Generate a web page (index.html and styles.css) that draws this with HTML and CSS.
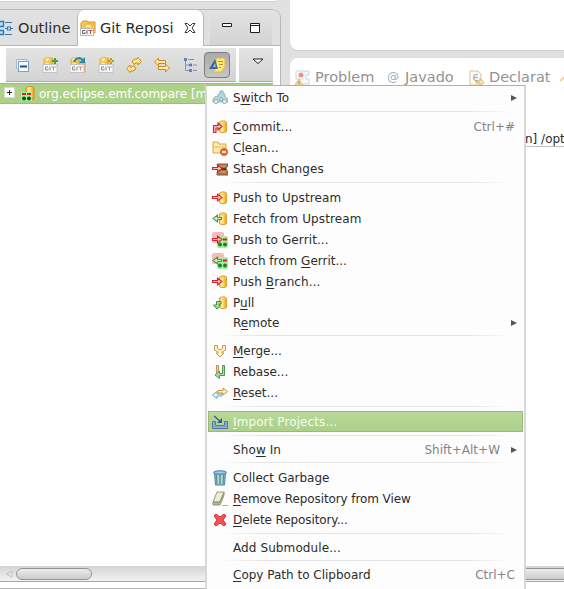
FILE: index.html
```
<!DOCTYPE html>
<html lang="en">
<head>
<meta charset="utf-8">
<title>Git Repositories</title>
<link rel="stylesheet" href="styles.css">
</head>
<body>
<svg class="defs" aria-hidden="true">
  <defs>
    <linearGradient id="gold"><stop offset="0" stop-color="#f3c94e"/><stop offset=".35" stop-color="#fff0a0"/><stop offset="1" stop-color="#e8a010"/></linearGradient>
    <symbol id="db" viewBox="0 0 16 16"><path d="M7.500 3c1-1.500 6-1.500 7 0v9.500c-1 1.500-6 1.500-7 0z" fill="url(#gold)" stroke="#dda12c"/><path d="M8 3.500c1 1 5 1 6 0" fill="none" stroke="#f6cf63"/></symbol>
    <symbol id="right" viewBox="0 0 16 16"><path d="M.5 6.500h5V4L10 7.500 5.500 11V8.500h-5z" fill="#f6c0c0" stroke="#d3242c" stroke-width="1.100"/></symbol>
    <symbol id="left" viewBox="0 0 16 16"><path d="M9.500 6.500h-4V4L1 7.500 5.500 11V8.500h4z" fill="#d5efd0" stroke="#4b9a4b" stroke-width="1.100"/></symbol>
    <symbol id="push" viewBox="0 0 16 16"><use href="#db"/><use href="#right"/></symbol>
    <symbol id="fetch" viewBox="0 0 16 16"><use href="#db"/><use href="#left"/></symbol>
    <symbol id="gerrit" viewBox="0 0 16 16"><rect width="12" height="11" rx="2" fill="#f8b9b9"/><rect x="5" y="4" width="11" height="12" rx="2" fill="#a5ee9c"/><path d="M11 7.500h4" stroke="#d52323" stroke-width="2"/><circle cx="8" cy="12.500" r="2" fill="#16851f"/><circle cx="13" cy="12.500" r="2" fill="#16851f"/></symbol>
    <symbol id="gitdb" viewBox="0 0 16 16"><path d="M2 2c2-2 7-2 9 0v8H2z" fill="url(#gold)" stroke="#e0b545"/><path d="M2 5h9" stroke="#e2b540"/><rect x="1" y="7.500" width="14" height="8" fill="#f6f6f6" stroke="#c4c4c4"/><path d="M6 10H3.500v3H6v-1.500M8 9.500v4" fill="none" stroke="#8d9093"/><path d="M9.500 10h4M11.500 10v3.500" stroke="#cf8c92"/></symbol>
  </defs>
</svg>

<div class="workbench">
  <section class="left-pane">
    <div class="upper-edge"></div>
    <div class="view">
      <div class="tabs">
        <div class="tab outline">
          <svg class="ic" viewBox="0 0 16 16"><path d="M1.500 1.500h5v5h-5zM1.500 10.500h5v4h-5z" fill="#b7dcf3" stroke="#2a78b4" stroke-width="1.400"/><path d="M8 2.500h7M8 14.500h7M8 8.500h2M14 8.500h2" stroke="#3475a8"/><rect x="10.500" y="7" width="3" height="3" fill="#cfe5f4" stroke="#3475a8"/></svg>
          <span>Outline</span>
        </div>
        <div class="tab active">
          <svg class="ic" viewBox="0 0 16 16"><path d="M1 13V3l2-2h4l1 1h7v11z" fill="#f8cb59" stroke="#d79121"/><path d="M5 7V4h7v3" fill="#ffe690" stroke="#e3a22e"/><rect x=".5" y="8.500" width="13" height="7" fill="#f5f5f5" stroke="#bbb"/><path d="M5 10.500H2.500v3H5V12M7 10v4" fill="none" stroke="#666"/><path d="M8.500 10.500h4M10.500 10.500V14" stroke="#c64952"/></svg>
          <span>Git Reposi</span>
          <svg class="close" viewBox="0 0 12 12"><path d="M1 1.500h2.500L6 4l2.500-2.500H11L8 6l3 4.500H8.500L6 8l-2.500 2.500H1L4 6z" fill="#fff" stroke="#333"/></svg>
        </div>
        <div class="tab-tools">
          <svg viewBox="0 0 40 12"><path d="M2.500 1.500h9v3h-9zM30.500 1.500h9v9h-9zM30.500 3.500h9" fill="#fff" stroke="#1d1d1d"/></svg>
        </div>
      </div>
      <div class="toolbar">
        <div class="tools">
          <svg class="tool" viewBox="0 0 16 16"><path d="M2.500 12V2.500h10V5" fill="#e8f4fb" stroke="#9cb7cf"/><rect x="4.500" y="4.500" width="10" height="10" fill="#f7fbfe" stroke="#7e9fc0"/><path d="M6 9.500h7" stroke="#1c4d87" stroke-width="2"/></svg>
          <svg class="tool" viewBox="0 0 16 16"><use href="#gitdb"/><path d="M10 4h6M13 1v6" stroke="#4da137" stroke-width="2"/></svg>
          <svg class="tool" viewBox="0 0 16 16"><path d="M9 5h6v10H9z" fill="#f3bd4c" stroke="#dfa030"/><use href="#gitdb" x="-1"/><path d="M4 5c2-5 7-5 9-1" fill="none" stroke="#2786ac" stroke-width="2"/><path d="M9 6h6V0z" fill="#2786ac"/></svg>
          <svg class="tool" viewBox="0 0 16 16"><use href="#gitdb"/><path d="M10 4h6M13 1v6" stroke="#c89231" stroke-width="2"/><path d="M12 4h2" stroke="#fff3b7"/></svg>
          <svg class="tool" viewBox="0 0 16 16"><path d="M6 4l3-2h2l1-1.500 3.500 4L12 8V6h-2L8 7.500zM10 12l-3 2H5l-1 1.500-3.500-4L4 8v2h2l2-1.500z" fill="#ffe39a" stroke="#c98a20"/></svg>
          <svg class="tool" viewBox="0 0 16 16"><path d="M.5 5l4-4v2.500h7v3h-7V9zM15.500 11l-4-4v2.500h-7v3h7V15z" fill="#ffe9a9" stroke="#c98a20"/></svg>
          <svg class="tool" viewBox="0 0 16 16"><path d="M3.500 3v10.500H8M3.500 8H8" fill="none" stroke="#8299b5"/><path d="M2.500 1.500h2v2h-2zM7.500 7h2v2h-2zM7.500 12.500h2v2h-2z" fill="#87a5d4" stroke="#5472aa"/><path d="M6 2.500h6M11 8h4M11 13.500h4" stroke="#8091b8"/></svg>
          <span class="pressed"><svg class="tool" viewBox="0 0 16 16"><path d="M7 1h9v9l-4 5H4l3-4z" fill="#ffe77c" stroke="#e0b547"/><path d="M9 4.500h5M10 7.500h4M10 10.500h2" stroke="#b39540"/><path d="M6 2l3 10H0zM6 6L4 10h3z" fill="#376ba2" fill-rule="evenodd"/></svg></span>
        </div>
        <div class="view-menu"><svg viewBox="0 0 12 7"><path d="M1 1h10L6 5.500z" fill="#fff" stroke="#222"/></svg></div>
      </div>
      <div class="tree">
        <div class="tree-row">
          <span class="expander"><svg viewBox="0 0 9 9"><path d="M2 4.500h5M4.500 2v5" stroke="#222"/></svg></span>
          <svg class="repo" viewBox="0 0 16 16"><path d="M6 2c1-2 7-2 8 0v11H6z" fill="url(#gold)" stroke="#d58d23"/><rect x="1" y="6" width="11" height="9" fill="#a4f59c"/><path d="M2 8h4M7 8h4" stroke="#df1d1d" stroke-width="2"/><circle cx="4" cy="12.500" r="2" fill="#124e1b"/><circle cx="9" cy="12.500" r="2" fill="#124e1b"/></svg>
          <span class="repo-name">org.eclipse.emf.compare [m</span>
        </div>
      </div>
      <div class="scroll"><svg class="arrow" viewBox="0 0 8 8"><path d="M7 1v6L1 4z" fill="none" stroke="#c4c4c4"/></svg><div class="thumb"></div></div>
      <div class="foot"></div>
    </div>
  </section>

  <section class="right-pane">
    <div class="editor"></div>
    <div class="lower">
      <div class="lower-tabs">
        <div class="ltab t1"><svg class="ic" viewBox="0 0 16 16"><path d="M1 1h9v8H1z" fill="#f9fbfc" stroke="#cbd9cc"/><circle cx="6" cy="5" r="2.500" fill="#eb9090"/><path d="M10 1h4v4h-3v4h3v5H8" fill="#f8f8fa" stroke="#cbd3dd"/><path d="M4 9l4 6H0z" fill="#f8dda9" stroke="#dfb97c"/><path d="M4 11v3" stroke="#9b7a55"/></svg><span>Problem</span></div>
        <div class="ltab t2"><span class="at">@</span><span>Javado</span></div>
        <div class="ltab t3"><svg class="ic" viewBox="0 0 16 16"><path d="M1 1h8l3 3v11H1z" fill="#fffdf5" stroke="#dfc18b"/><path d="M9 4.500C3 3 3 12 9 10.500M5 7.500h4" fill="none" stroke="#9bb9d5" stroke-width="1.300"/><path d="M7 11h4V8.500l4 4-4 3.500v-3H7z" fill="#ffeab6" stroke="#d7ad5e"/></svg><span>Declarat</span></div>
        <svg class="pen" viewBox="0 0 8 16"><path d="M1 13l7-6" stroke="#efd394" stroke-width="2"/></svg>
      </div>
      <div class="console">n] /opt</div>
      <div class="console-body"></div>
      <div class="scroll right-scroll"><div class="thumb"></div></div>
    </div>
  </section>
</div>

<nav class="menu">
  <div class="item"><svg viewBox="0 0 16 16"><path d="M1 9l3-3 2 1V4h2V1h3v3h2v3l3 2v3H1z" fill="#b5d8da" stroke="#8fb8bc"/><circle cx="4" cy="11.500" r="2" fill="#eef7f7" stroke="#7fa9ae"/><circle cx="9" cy="9" r="1.500" fill="#eef7f7" stroke="#7fa9ae"/><circle cx="12.500" cy="11.500" r="2" fill="#eef7f7" stroke="#7fa9ae"/></svg><span>S<u>w</u>itch To</span><i></i></div>
  <hr>
  <div class="item wide"><svg viewBox="0 0 16 16"><use href="#db"/><path d="M1.500 13.500v-7H6V4l4 3.500L6 11V9H4v4.500z" fill="#f6baba" stroke="#d3242c" stroke-width="1.100"/></svg><span><u>C</u>ommit...</span><kbd>Ctrl+#</kbd></div>
  <div class="item"><svg viewBox="0 0 16 16"><path d="M1 13V2h5l1 2h7v9z" fill="#ffe9a9" stroke="#d9a549"/><path d="M1 7h13" stroke="#e4bc69"/><circle cx="12" cy="12" r="3.500" fill="#e87832" stroke="#ca5522"/><path d="M10 12h4" stroke="#fff" stroke-width="1.500"/></svg><span>C<u>l</u>ean...</span></div>
  <div class="item wide"><svg viewBox="0 0 16 16"><path d="M5 3h11v2l-2 2 2 5v2H5v-2l2-4z" fill="#a97648" stroke="#8a5a30"/><path d="M7 5h7M8 11h6" stroke="#d8ae75"/><path d="M9 8h5" stroke="#5c351b" stroke-width="2"/><use href="#right"/></svg><span>Stash Changes</span></div>
  <hr>
  <div class="item wide"><svg><use href="#push"/></svg><span>Push to Upstream</span></div>
  <div class="item wide"><svg><use href="#fetch"/></svg><span>Fetch from Upstream</span></div>
  <div class="item wide"><svg viewBox="0 0 16 16"><use href="#gerrit"/><use href="#right"/></svg><span>Push to Gerrit...</span></div>
  <div class="item"><svg viewBox="0 0 16 16"><use href="#gerrit"/><use href="#left"/></svg><span>Fetch from <u>G</u>errit...</span></div>
  <div class="item wide"><svg><use href="#push"/></svg><span>Push <u>B</u>ranch...</span></div>
  <div class="item"><svg viewBox="0 0 16 16"><use href="#db"/><path d="M9 6.500H4.500V10h-3L5 14l3.500-4H7V9h2z" fill="#a6dc9d" stroke="#3f9347"/></svg><span>P<u>u</u>ll</span></div>
  <div class="item plain"><span>R<u>e</u>mote</span><i></i></div>
  <hr>
  <div class="item"><svg viewBox="0 0 16 16"><path d="M2.500 2.500h3v3L8 7l2.500-1.500v-3h3V7L10 9v1h2l-4 4-4-4h2V9L2.500 7z" fill="#fff0c0" stroke="#c49a51"/></svg><span><u>M</u>erge...</span></div>
  <div class="item"><svg viewBox="0 0 16 16"><path d="M4.500 1.500h2V9h-2z" fill="#ead398" stroke="#bd9758"/><path d="M10.500 1.500h2v10h-5v3L3 11l4.500-4v2.500h3z" fill="#a9dba0" stroke="#4b9a4b"/></svg><span>Rebase...</span></div>
  <div class="item"><svg viewBox="0 0 16 16"><path d="M6 5.500h5V3l4.500 3.500L11 10V8H6z" fill="#fff1c8" stroke="#c39243"/><path d="M10 9H5V6.500L.5 10 5 13.500V11h5z" fill="#e3f5f8" stroke="#75a8b5"/></svg><span><u>R</u>eset...</span></div>
  <hr>
  <div class="item wide selected"><svg viewBox="0 0 16 16"><path d="M.5 7.500v7h15v-7h-3v4h-9v-4z" fill="#86abd5" stroke="#5778ad"/><path d="M2 2l7 6" stroke="#315e82" stroke-width="1.300"/><path d="M10 4v5H5z" fill="#315e82"/></svg><span><u>I</u>mport Projects...</span></div>
  <hr>
  <div class="item plain wide"><span>Sho<u>w</u> In</span><kbd class="with-arrow">Shift+Alt+W</kbd><i></i></div>
  <hr>
  <div class="item"><svg viewBox="0 0 16 16"><path d="M2.500 3h11l-1 12h-9z" fill="#83b7d2" stroke="#4a85a8"/><path d="M6 5v9M10 5v9" stroke="#cce8b2" stroke-width="1.500"/><path d="M4.500 5l.5 9M8 5v9M11.500 5l-.5 9" stroke="#4a88a8"/><ellipse cx="8" cy="2.500" rx="6.500" ry="1.700" fill="#9dcbe1" stroke="#397ba6"/></svg><span>Collect Garbage</span></div>
  <div class="item narrow"><svg viewBox="0 0 16 16"><path d="M5 1h7l-4 10H1z" fill="#ecefcf" stroke="#9a9d82"/><path d="M1 11h7l4-10v3L8 14H1z" fill="#b3b694" stroke="#929579"/><path d="M10 14.500h6" stroke="#aaa"/></svg><span><u>R</u>emove Repository from View</span></div>
  <div class="item narrow"><svg viewBox="0 0 16 16"><path d="M2 4l2-2 4 3 4-3 2 2-3 4 3 4-2 2-4-3-4 3-2-2 3-4z" fill="#ef5255" stroke="#d9323e"/></svg><span><u>D</u>elete Repository...</span></div>
  <hr>
  <div class="item plain wide"><span>Add Submodule...</span></div>
  <hr>
  <div class="item plain"><span><u>C</u>opy Path to Clipboard</span><kbd>Ctrl+C</kbd></div>
  <div class="item plain last"><span>Paste Repository Path or URL</span></div>
</nav>
</body>
</html>
```
FILE: styles.css
```
* { box-sizing: border-box; }
body {
  margin: 0;
  width: 564px;
  height: 589px;
  overflow: hidden;
  background: #e0e0e0;
  color: #2c2c2c;
  font: 12px/19px "DejaVu Sans", sans-serif;
}
svg { display: block; flex: none; }
.defs { position: absolute; width: 0; height: 0; }
.workbench { display: flex; height: 589px; }

.left-pane { width: 281px; flex: none; display: flex; flex-direction: column; }
.upper-edge { height: 2px; width: 276px; background: #fff; border-bottom: 1px solid #d2d2d2; }
.view {
  flex: 1;
  margin-top: 7px;
  border: solid #b7b7b7;
  border-width: 1px 1px 0 0;
  border-radius: 0 9px 0 0;
  background: #fff;
  display: flex;
  flex-direction: column;
  overflow: hidden;
}
.tabs { display: flex; height: 36px; flex: none; background: #e0e0e0; border-bottom: 1px solid #b5b5b5; }
.tab { display: flex; align-items: center; font-size: 14.5px; }
.tab span { padding-top: 1px; }
.outline { width: 77px; }
.outline .ic { margin-left: -3px; margin-right: 5px; }
.ic { width: 16px; height: 16px; }
.active {
  width: 127px;
  height: 36px;
  background: #fff;
  border: solid #b7b7b7;
  border-width: 0 1px;
  border-radius: 7px 7px 0 0;
  padding-left: 2px;
}
.active .ic { margin-right: 4px; }
.active span { width: 84px; white-space: nowrap; }
.close { width: 12px; height: 12px; }
.tab-tools { flex: 1; margin: 0 8px 0 6px; padding: 12px 0 0 10px; background: linear-gradient(#e2e2e2, #d4d4d4); }
.tab-tools svg { width: 40px; height: 12px; }
.toolbar { display: flex; gap: 3px; height: 34px; flex: none; margin: 2px 7px 1px 6px; }
.tools { display: flex; align-items: center; width: 230px; background: linear-gradient(#e4e4e4, #d3d3d3); border-bottom: 1px solid #aaa; padding-left: 8px; gap: 12px; }
.tool { width: 16px; height: 16px; }
.pressed { width: 26px; height: 26px; margin-left: -6px; padding: 4px; background: linear-gradient(#aaa, #c6c6c6); border: 1px solid #7d7d7d; border-radius: 4px; }
.view-menu { flex: 1; background: linear-gradient(#e4e4e4, #d3d3d3); border-bottom: 1px solid #aaa; padding: 10px 0 0 13px; }
.view-menu svg { width: 12px; height: 7px; }
.tree { flex: 1; }
.tree-row { height: 21px; width: 273px; background: #aed189; border: solid #98bf77; border-width: 1px 0; display: flex; align-items: center; color: #fff; }
.expander { flex: none; width: 11px; height: 11px; margin: -2px 0 0 4px; background: #fff; border: 1px solid #d5e0ca; }
.expander svg { width: 9px; height: 9px; }
.repo { width: 16px; height: 16px; margin: 0 3px 0 5px; }
.repo-name { white-space: nowrap; padding-top: 1px; }
.scroll { height: 16px; flex: none; background: linear-gradient(#d4d4d4, #f2f2f2); border-bottom: 1px solid #a9a9a0; display: flex; align-items: center; }
.arrow { width: 8px; height: 8px; margin: 0 8px 0 5px; }
.thumb { width: 76px; height: 12px; margin-left: -5px; border: 1px solid #959595; border-radius: 6px; background: linear-gradient(#ededed, #cbcbcb); }
.foot { height: 7px; border-bottom: 1px solid #b5b5b5; }

.right-pane { flex: 1; min-width: 0; padding-left: 9px; display: flex; flex-direction: column; }
.editor { height: 50px; background: #fff; border-radius: 0 0 0 8px; box-shadow: 0 1px 1px #d0d0d0; }
.lower { flex: 1; margin-top: 8px; background: #fff; border-radius: 8px 0 0; display: flex; flex-direction: column; overflow: hidden; }
.lower-tabs { display: flex; height: 70px; flex: none; padding-top: 10px; font-size: 14.5px; color: #929292; align-items: flex-start; }
.ltab { display: flex; align-items: center; flex: none; }
.t1 { width: 97px; padding-left: 5px; gap: 4px; }
.t2 { width: 82px; gap: 6px; }
.at { color: #92b5d3; font-size: 12px; }
.t3 { width: 90px; gap: 4px; }
.pen { width: 8px; height: 16px; }
.console { height: 19px; padding: 2px 0 0 235px; border-bottom: 1px solid #bfbfbf; white-space: nowrap; }
.console-body { flex: 1; }
.right-scroll .thumb { flex: none; width: 310px; }
.lower::after { content: ""; height: 7px; }

.menu { position: absolute; left: 205px; top: 85px; width: 321px; height: 504px; overflow: hidden; padding-top: 1px; background: #fdfdfd; border: solid #d8d8d8; border-width: 1px 2px 0; border-top-color: #afafaf; }
.item { display: flex; align-items: center; height: 21px; padding-left: 5px; white-space: nowrap; }
.item svg { width: 16px; height: 16px; margin-right: 5px; }
.item span, .item kbd { padding-top: 1px; }
.item u { text-underline-offset: 2px; text-decoration-thickness: 1px; text-decoration-skip-ink: none; }
.plain { height: 19px; padding-left: 26px; }
.wide span { letter-spacing: .1px; }
.narrow span { letter-spacing: -.1px; }
.last { margin-top: 1px; }
.item i { margin-left: auto; margin-right: 7px; border: solid transparent; border-width: 3px 0 3px 6px; border-left-color: #555; }
.item kbd { margin-left: auto; margin-right: 9px; font: inherit; color: #858585; }
.item .with-arrow { margin-right: 11px; }
.item .with-arrow + i { margin-left: 0; }
.selected { background: linear-gradient(#b9d99a, #abcf88); box-shadow: inset 0 0 0 1px #94bd72; color: #f7fbf2; margin: 0 1px; padding-left: 4px; }
.selected svg { margin-right: 5px; }
.menu hr { height: 1px; margin: 3px 11px 4px; border: 0; background: linear-gradient(90deg, transparent, #e5e5e5 15%, #e5e5e5 85%, transparent); }
```
